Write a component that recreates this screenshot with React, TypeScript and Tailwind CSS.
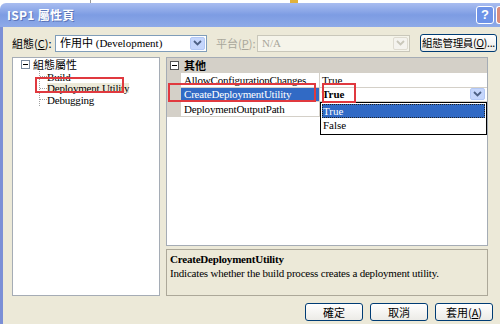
const serif = "font-['Liberation_Serif','Noto_Sans_CJK_TC',serif]";
const cjk = "font-['Noto_Sans_CJK_TC','Liberation_Sans',sans-serif]";

function Chevron({ disabled }: { disabled?: boolean }) {
  return (
    <div
      className={`w-[15px] h-full flex items-center justify-center rounded-[2px] border ${
        disabled ? "bg-[#f4f3ee] border-[#dedbd0]" : "bg-[#c5d6fc] border-[#b3c8f5]"
      }`}
    >
      <svg width="9" height="6" viewBox="0 0 9 6">
        <path
          d="M1 1 L4.5 4.5 L8 1"
          fill="none"
          stroke={disabled ? "#c9c7ba" : "#4d6185"}
          strokeWidth="1.8"
        />
      </svg>
    </div>
  );
}

function Combo({ text, width, disabled }: { text: string; width: string; disabled?: boolean }) {
  return (
    <div
      className={`${width} h-[17px] flex items-center border p-[1px] ${
        disabled ? "border-[#c9c7ba] bg-[#f5f4ea]" : "border-[#7f9db9] bg-white"
      }`}
    >
      <div
        className={`flex-1 pl-[3px] text-[11px] leading-none whitespace-nowrap ${
          disabled ? "text-[#a9a79b]" : "text-black"
        }`}
      >
        {text}
      </div>
      <Chevron disabled={disabled} />
    </div>
  );
}

function XpButton({ children, width }: { children: React.ReactNode; width: string }) {
  return (
    <div
      className={`${width} h-[18px] flex items-center justify-center whitespace-nowrap rounded-[3px] border border-[#003c74] bg-gradient-to-b from-white to-[#ecebe6] text-[11px] leading-none text-black ${cjk}`}
    >
      {children}
    </div>
  );
}

const rows = [
  { name: "AllowConfigurationChanges", value: "True" },
  { name: "CreateDeploymentUtility", value: "True", selected: true },
  { name: "DeploymentOutputPath", value: "" },
];

export default function App() {
  return (
    <div className={`w-[500px] h-[324px] overflow-hidden bg-white flex flex-col relative ${serif}`}>
      <div className="h-[3px] bg-white relative">
        <div className="absolute left-[90px] top-0 w-[1px] h-[3px] bg-[#999]" />
        <div className="absolute left-[290px] top-0 w-[8px] h-[3px] bg-[#e2b23a]" />
      </div>

      {/* title bar */}
      <div className="h-[24px] flex items-center rounded-tl-[6px] bg-gradient-to-b from-[#a9bdf0] via-[#7d9ce3] to-[#8eaae8] pl-[7px]">
        <span className={`text-[12px] font-bold text-white tracking-[0.3px] ${cjk} [text-shadow:1px_1px_0_#5b74b8]`}>
          ISP1 屬性頁
        </span>
        <div className="ml-auto flex gap-[2px] items-center">
          <div className="w-[18px] h-[18px] rounded-[3px] border border-white bg-[#6e93e8] flex items-center justify-center text-white text-[13px] font-bold font-['Liberation_Sans',sans-serif]">
            ?
          </div>
          <div className="w-[4px] h-[18px] rounded-l-[3px] border border-r-0 border-white bg-[#d98b7c]" />
        </div>
      </div>

      {/* body */}
      <div className="flex-1 flex flex-col border-l-[3px] border-[#7b8fd6] bg-[#ece9d8] pl-[9px] pt-[7px]">
        {/* row 1 */}
        <div className={`flex items-center h-[18px] text-[11px] ${cjk}`}>
          <span className="w-[43px] text-black whitespace-nowrap">
            組態(<span className="underline">C</span>):
          </span>
          <div className={serif}>
            <Combo text="作用中 (Development)" width="w-[152px]" />
          </div>
          <span className="ml-[9px] w-[41px] text-[#a9a79b] whitespace-nowrap">
            平台(<span className="underline">P</span>):
          </span>
          <div className={serif}>
            <Combo text="N/A" width="w-[153px]" disabled />
          </div>
          <div className="ml-[10px]">
            <XpButton width="w-[77px]">
              <span className="text-[10.5px] tracking-[-0.3px]">
                組態管理員(<span className="underline">O</span>)...
              </span>
            </XpButton>
          </div>
        </div>

        {/* panels */}
        <div className="flex mt-[5px] gap-[6px]">
          {/* tree */}
          <div className="w-[148px] h-[239px] bg-white border border-[#a5acb5] pl-[8px] text-[11px] leading-[11px]">
            <div className="flex items-center h-[13px]">
              <div className="w-[9px] h-[9px] border border-[#7b8b9f] flex items-center justify-center bg-white">
                <div className="w-[5px] h-[1px] bg-black" />
              </div>
              <span className={`ml-[3px] leading-none ${cjk}`}>組態屬性</span>
            </div>
            <div className="ml-[18px] border-l border-dotted border-[#a0a0a0] w-[100px]">
              {["Build", "Deployment Utility", "Debugging"].map((t, i) => (
                <div key={t} className="flex items-center h-[11.5px]">
                  <div className="w-[7px] border-t border-dotted border-[#a0a0a0]" />
                  <span
                    className={`leading-[10px] tracking-[-0.2px] whitespace-nowrap ${
                      i === 1 ? "bg-[#ece9d8]" : ""
                    }`}
                  >
                    {t}
                  </span>
                </div>
              ))}
            </div>
          </div>

          {/* grid + description */}
          <div className="w-[322px] flex flex-col gap-[3px]">
            <div className="h-[189px] bg-white border border-[#a5acb5] flex flex-col relative">
              <div className="h-[15px] bg-[#d4d0c8] flex items-center">
                <div className="w-[14px] flex justify-center">
                  <div className="w-[9px] h-[9px] border border-[#555] bg-white flex items-center justify-center">
                    <div className="w-[5px] h-[1px] bg-black" />
                  </div>
                </div>
                <span className={`ml-[3px] text-[11px] leading-none font-bold ${cjk}`}>其他</span>
              </div>
              {rows.map((r) => (
                <div key={r.name} className="h-[14.5px] flex text-[11px]">
                  <div className="w-[14px] bg-[#d4d0c8]" />
                  <div
                    className={`w-[139px] pl-[3px] flex items-center border-b border-r border-[#d4d0c8] tracking-[-0.2px] whitespace-nowrap overflow-hidden ${
                      r.selected ? "bg-[#316ac5] text-white" : "text-black"
                    }`}
                  >
                    {r.name}
                  </div>
                  <div className="flex-1 flex items-center border-b border-[#d4d0c8] pl-[2px]">
                    {r.selected ? (
                      <div className="flex-1 flex items-center h-full pr-[2px]">
                        <span className="font-bold flex-1">{r.value}</span>
                        <div className="h-[12px]">
                          <Chevron />
                        </div>
                      </div>
                    ) : (
                      r.value
                    )}
                  </div>
                </div>
              ))}
              <div className="flex-1" />

              {/* dropdown list */}
              <div className="absolute left-[153px] top-[44px] w-[167px] h-[33px] bg-white border border-black text-[11px] p-[1px]">
                <div className="h-[14px] bg-[#316ac5] text-white flex items-center pl-[1px] outline-1 outline-dotted outline-[#222] -outline-offset-1">
                  True
                </div>
                <div className="h-[14px] flex items-center pl-[1px]">False</div>
              </div>
            </div>

            <div className="h-[47px] border border-[#aca899] bg-[#ece9d8] px-[3px] pt-[2px] text-[11px] leading-[14px]">
              <div className="font-bold tracking-[-0.2px]">CreateDeploymentUtility</div>
              <div className="tracking-[-0.2px]">Indicates whether the build process creates a deployment utility.</div>
            </div>
          </div>
        </div>

        {/* buttons */}
        <div className="flex justify-end gap-[7px] mt-[7px] pr-[7px]">
          <XpButton width="w-[58px]">確定</XpButton>
          <XpButton width="w-[58px]">取消</XpButton>
          <XpButton width="w-[58px]">
            套用(<span className="underline">A</span>)
          </XpButton>
        </div>
      </div>

      {/* red annotation boxes */}
      <div className="absolute left-[35px] top-[77px] w-[89px] h-[16px] border-2 border-[#e0393f]" />
      <div className="absolute left-[168px] top-[83px] w-[148px] h-[19px] border-2 border-[#e0393f]" />
      <div className="absolute left-[322px] top-[83px] w-[34px] h-[20px] border-2 border-[#e0393f]" />
    </div>
  );
}
